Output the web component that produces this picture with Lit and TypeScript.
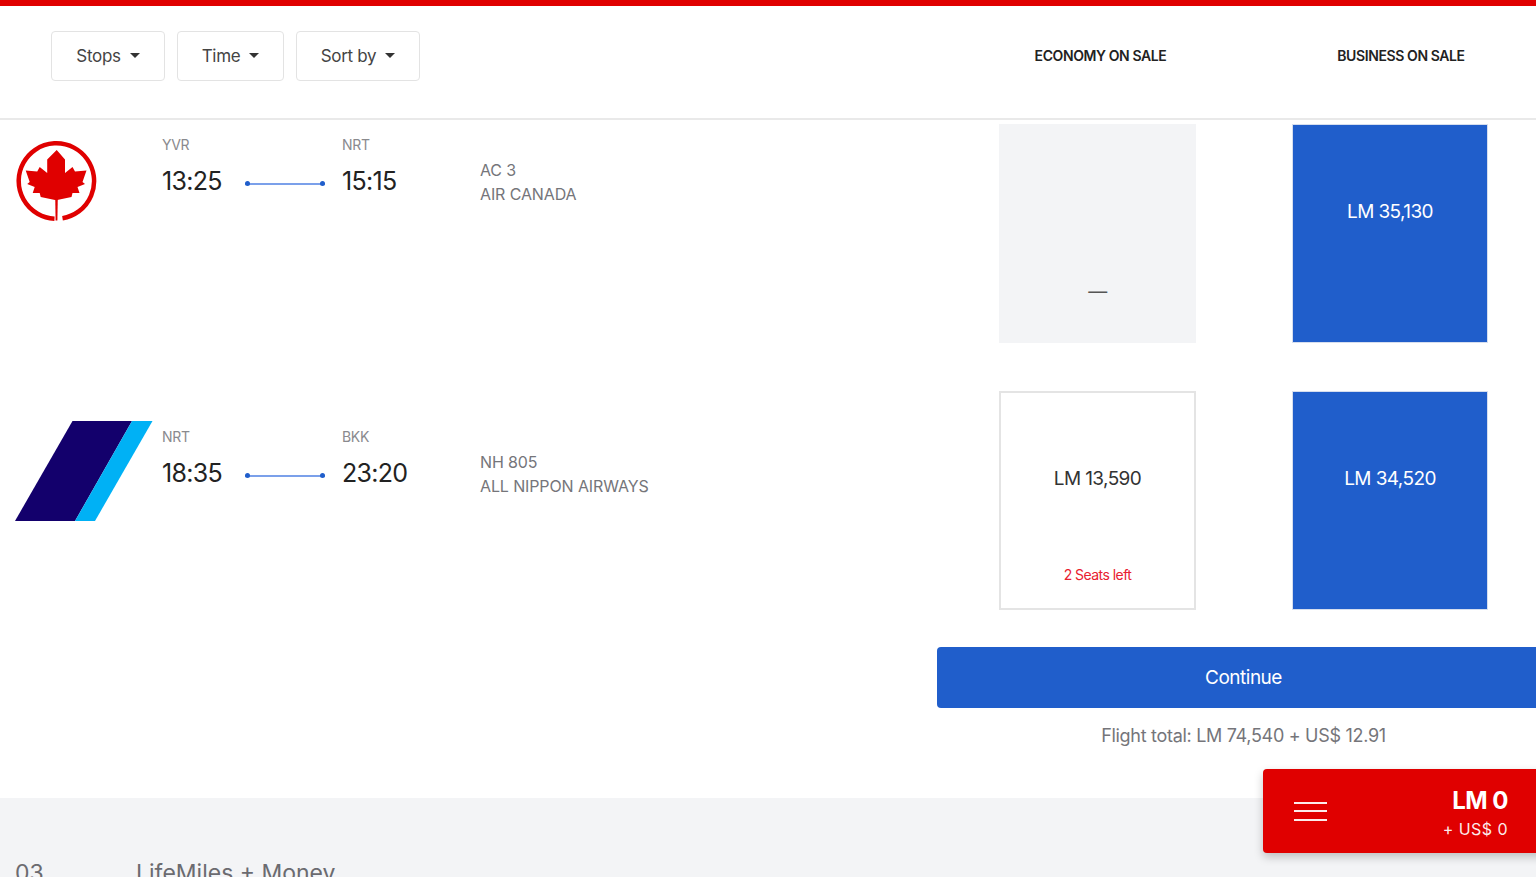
import { LitElement, css, html, svg } from 'lit';
import { customElement } from 'lit/decorators.js';

const mapleLogo = html`
  <svg class="logo-ac" viewBox="0 0 82 80" aria-hidden="true">
    <path d="M38.500 77.650A37.700 37.700 0 1 1 46.500 77.200" fill="none" stroke="#e00000" stroke-width="4.500" />
    <path
      fill="#e00000"
      d="M40.700 9L49 18.500V32l7.500-6 2.500 4.500 11.500-1-4 11.500 2.500 2-7.500 3 2 6h-7l-1 4-14.300 3h-2.200l-14.300-3-1-4h-7l2-6-7.500-3 2.500-2-4-11.500 11.500 1 2.500-4.500 7.500 6V18.500z"
    />
    <path d="M39.200 56h2.600l-.4 23.500h-1.800z" fill="#e00000" />
  </svg>
`;

const anaLogo = html`
  <svg class="logo-ana" viewBox="0 0 138 100" aria-hidden="true">
    <polygon points="57.500,0 117,0 60,100 0,100" fill="#13006c" />
    <polygon points="117,0 137.500,0 80,100 60,100" fill="#00b1f5" />
  </svg>
`;

const caret = svg`<path d="M0 0h9L4.500 4.500z" fill="#333"></path>`;

@customElement('app-root')
export class AppRoot extends LitElement {
  static styles = css`
    :host {
      display: block;
      height: 877px;
      overflow: hidden;
      position: relative;
      background: #fff;
      color: #222;
      font-family: Inter, 'Liberation Sans', sans-serif;
    }

    .accent {
      height: 6px;
      background: #e00000;
    }

    .filters {
      display: grid;
      grid-template-columns: 1fr 197px 196px;
      column-gap: 96px;
      align-items: center;
      box-sizing: border-box;
      height: 114px;
      padding: 0 48px 13px 0;
      border-bottom: 2px solid #e9e9e9;
    }

    .filter-buttons {
      display: flex;
      gap: 12px;
      padding-left: 51px;
    }

    .filter-btn {
      display: flex;
      align-items: center;
      justify-content: center;
      gap: 9px;
      height: 50px;
      box-sizing: border-box;
      border: 1.500px solid #e3e3e3;
      border-radius: 4px;
      background: #fff;
      color: #444;
      font: 400 17px Inter, sans-serif;
      letter-spacing: -0.3px;
      padding: 0;
    }

    .filter-btn svg {
      width: 10px;
      height: 5px;
    }

    .w-stops { width: 114px; }
    .w-time { width: 107px; }
    .w-sort { width: 124px; }

    .col-head {
      font-size: 14px;
      font-weight: 600;
      letter-spacing: -0.4px;
      white-space: nowrap;
      color: #222;
      text-align: center;
    }

    .col-head.eco { transform: translateX(3px); }
    .col-head.bus { transform: translateX(11px); }

    .flights {
      display: flex;
      flex-direction: column;
      gap: 48px;
      padding-top: 4px;
    }

    .row {
      display: grid;
      grid-template-columns: 1fr 197px 196px;
      column-gap: 96px;
      height: 219px;
      padding-right: 48px;
    }

    .leg {
      display: flex;
      align-items: flex-start;
      padding-left: 15px;
    }

    .leg.first { padding-top: 12px; }
    .leg.second { padding-top: 30px; }
    .leg.second .times, .leg.second .info { margin-top: 7px; }

    .logo-cell {
      flex: 0 0 147px;
    }

    .logo-ac {
      display: block;
      width: 82px;
      height: 80px;
      margin: 5px 0 0 1px;
    }

    .logo-ana {
      display: block;
      width: 138px;
      height: 100px;
    }

    .times {
      display: grid;
      grid-template-columns: 83px 80px 17px 138px;
      grid-template-rows: 17px 57px;
    }

    .code {
      font-size: 14px;
      line-height: 17px;
      color: #8a8a8e;
      letter-spacing: -0.3px;
    }

    .code.dest { grid-column: 4; }

    .time {
      font-size: 25px;
      line-height: 57px;
      color: #222;
      letter-spacing: -0.7px;
      grid-row: 2;
    }

    .time.dest { grid-column: 4; }

    .line {
      grid-row: 2;
      grid-column: 2;
      position: relative;
      height: 1.500px;
      background: #7ba0ea;
      align-self: center;
      margin-top: 5px;
    }

    .line::before,
    .line::after {
      content: '';
      position: absolute;
      top: -2px;
      width: 5px;
      height: 5px;
      border-radius: 50%;
      background: #205ecb;
    }

    .line::before { left: 0; }
    .line::after { right: 0; }

    .info {
      padding-top: 22px;
      font-size: 16px;
      line-height: 24px;
      color: #75757a;
      letter-spacing: -0.12px;
      white-space: nowrap;
    }

    .fare {
      box-sizing: border-box;
      display: flex;
      flex-direction: column;
      align-items: center;
      height: 219px;
      font-size: 19px;
      line-height: 24px;
      letter-spacing: -0.6px;
      white-space: nowrap;
    }

    .fare.empty {
      background: #f3f4f6;
      color: #555;
      justify-content: flex-end;
      padding-bottom: 39px;
    }

    .fare.outlined {
      border: 2px solid #e4e4e4;
      color: #333;
      padding-top: 74px;
    }

    .fare.sale {
      background: #205ecb;
      color: #fff;
      border: 1px solid #d6deee;
      padding-top: 75px;
    }

    .seats {
      margin-top: 74px;
      font-size: 14px;
      line-height: 20px;
      letter-spacing: -0.55px;
      color: #e8202f;
    }

    .checkout {
      display: flex;
      flex-direction: column;
      margin: 37px 0 0 937px;
      width: 613px;
    }

    .continue {
      height: 61px;
      border: 0;
      border-radius: 4px;
      background: #205ecb;
      color: #fff;
      font: 400 19px Inter, sans-serif;
      letter-spacing: -0.5px;
    }

    .total {
      margin-top: 16px;
      text-align: center;
      font-size: 18px;
      line-height: 24px;
      color: #75757a;
      letter-spacing: -0.3px;
    }

    .next-step {
      display: flex;
      margin-top: 50px;
      height: 200px;
      padding: 60px 0 0 15px;
      background: #f3f4f6;
      color: #6b6b70;
      font-size: 23px;
      line-height: 30px;
    }

    .next-step .num {
      flex: 0 0 121px;
    }

    .summary {
      position: absolute;
      left: 1263px;
      top: 769px;
      width: 285px;
      height: 84px;
      box-sizing: border-box;
      display: flex;
      align-items: center;
      justify-content: space-between;
      padding: 0 40px 0 31px;
      background: #e00000;
      color: #fff;
      border-radius: 4px;
      box-shadow: 0 4px 10px rgba(0, 0, 0, 0.22);
    }

    .burger {
      display: flex;
      flex-direction: column;
      gap: 6.500px;
      width: 33px;
    }

    .burger span {
      height: 2px;
      background: #fff;
      opacity: 0.92;
    }

    .amounts {
      text-align: right;
      margin-top: 5px;
      white-space: nowrap;
    }

    .miles {
      font-size: 24px;
      line-height: 30px;
      font-weight: 700;
      letter-spacing: -0.5px;
    }

    .cash {
      font-size: 16px;
      line-height: 26px;
      letter-spacing: 0.45px;
      opacity: 0.92;
    }
  `;

  private filterButton(label: string, widthClass: string) {
    return html`
      <button class="filter-btn ${widthClass}">
        ${label}
        <svg viewBox="0 0 9 4.500" aria-hidden="true">${caret}</svg>
      </button>
    `;
  }

  render() {
    return html`
      <div class="accent"></div>
      <div class="filters">
        <div class="filter-buttons">
          ${this.filterButton('Stops', 'w-stops')}
          ${this.filterButton('Time', 'w-time')}
          ${this.filterButton('Sort by', 'w-sort')}
        </div>
        <div class="col-head eco">ECONOMY ON SALE</div>
        <div class="col-head bus">BUSINESS ON SALE</div>
      </div>

      <div class="flights">
        <div class="row">
          <div class="leg first">
            <div class="logo-cell">${mapleLogo}</div>
            <div class="times">
              <div class="code">YVR</div>
              <div class="code dest">NRT</div>
              <div class="time">13:25</div>
              <div class="line"></div>
              <div class="time dest">15:15</div>
            </div>
            <div class="info">AC 3<br />AIR CANADA</div>
          </div>
          <div class="fare empty">—</div>
          <div class="fare sale">LM 35,130</div>
        </div>

        <div class="row">
          <div class="leg second">
            <div class="logo-cell">${anaLogo}</div>
            <div class="times">
              <div class="code">NRT</div>
              <div class="code dest">BKK</div>
              <div class="time">18:35</div>
              <div class="line"></div>
              <div class="time dest">23:20</div>
            </div>
            <div class="info">NH 805<br />ALL NIPPON AIRWAYS</div>
          </div>
          <div class="fare outlined">
            LM 13,590
            <div class="seats">2 Seats left</div>
          </div>
          <div class="fare sale">LM 34,520</div>
        </div>
      </div>

      <div class="checkout">
        <button class="continue">Continue</button>
        <div class="total">Flight total: LM 74,540 + US$ 12.91</div>
      </div>

      <div class="next-step">
        <div class="num">03</div>
        <div>LifeMiles + Money</div>
      </div>

      <div class="summary">
        <div class="burger"><span></span><span></span><span></span></div>
        <div class="amounts">
          <div class="miles">LM 0</div>
          <div class="cash">+ US$ 0</div>
        </div>
      </div>
    `;
  }
}

declare global {
  interface HTMLElementTagNameMap {
    'app-root': AppRoot;
  }
}
